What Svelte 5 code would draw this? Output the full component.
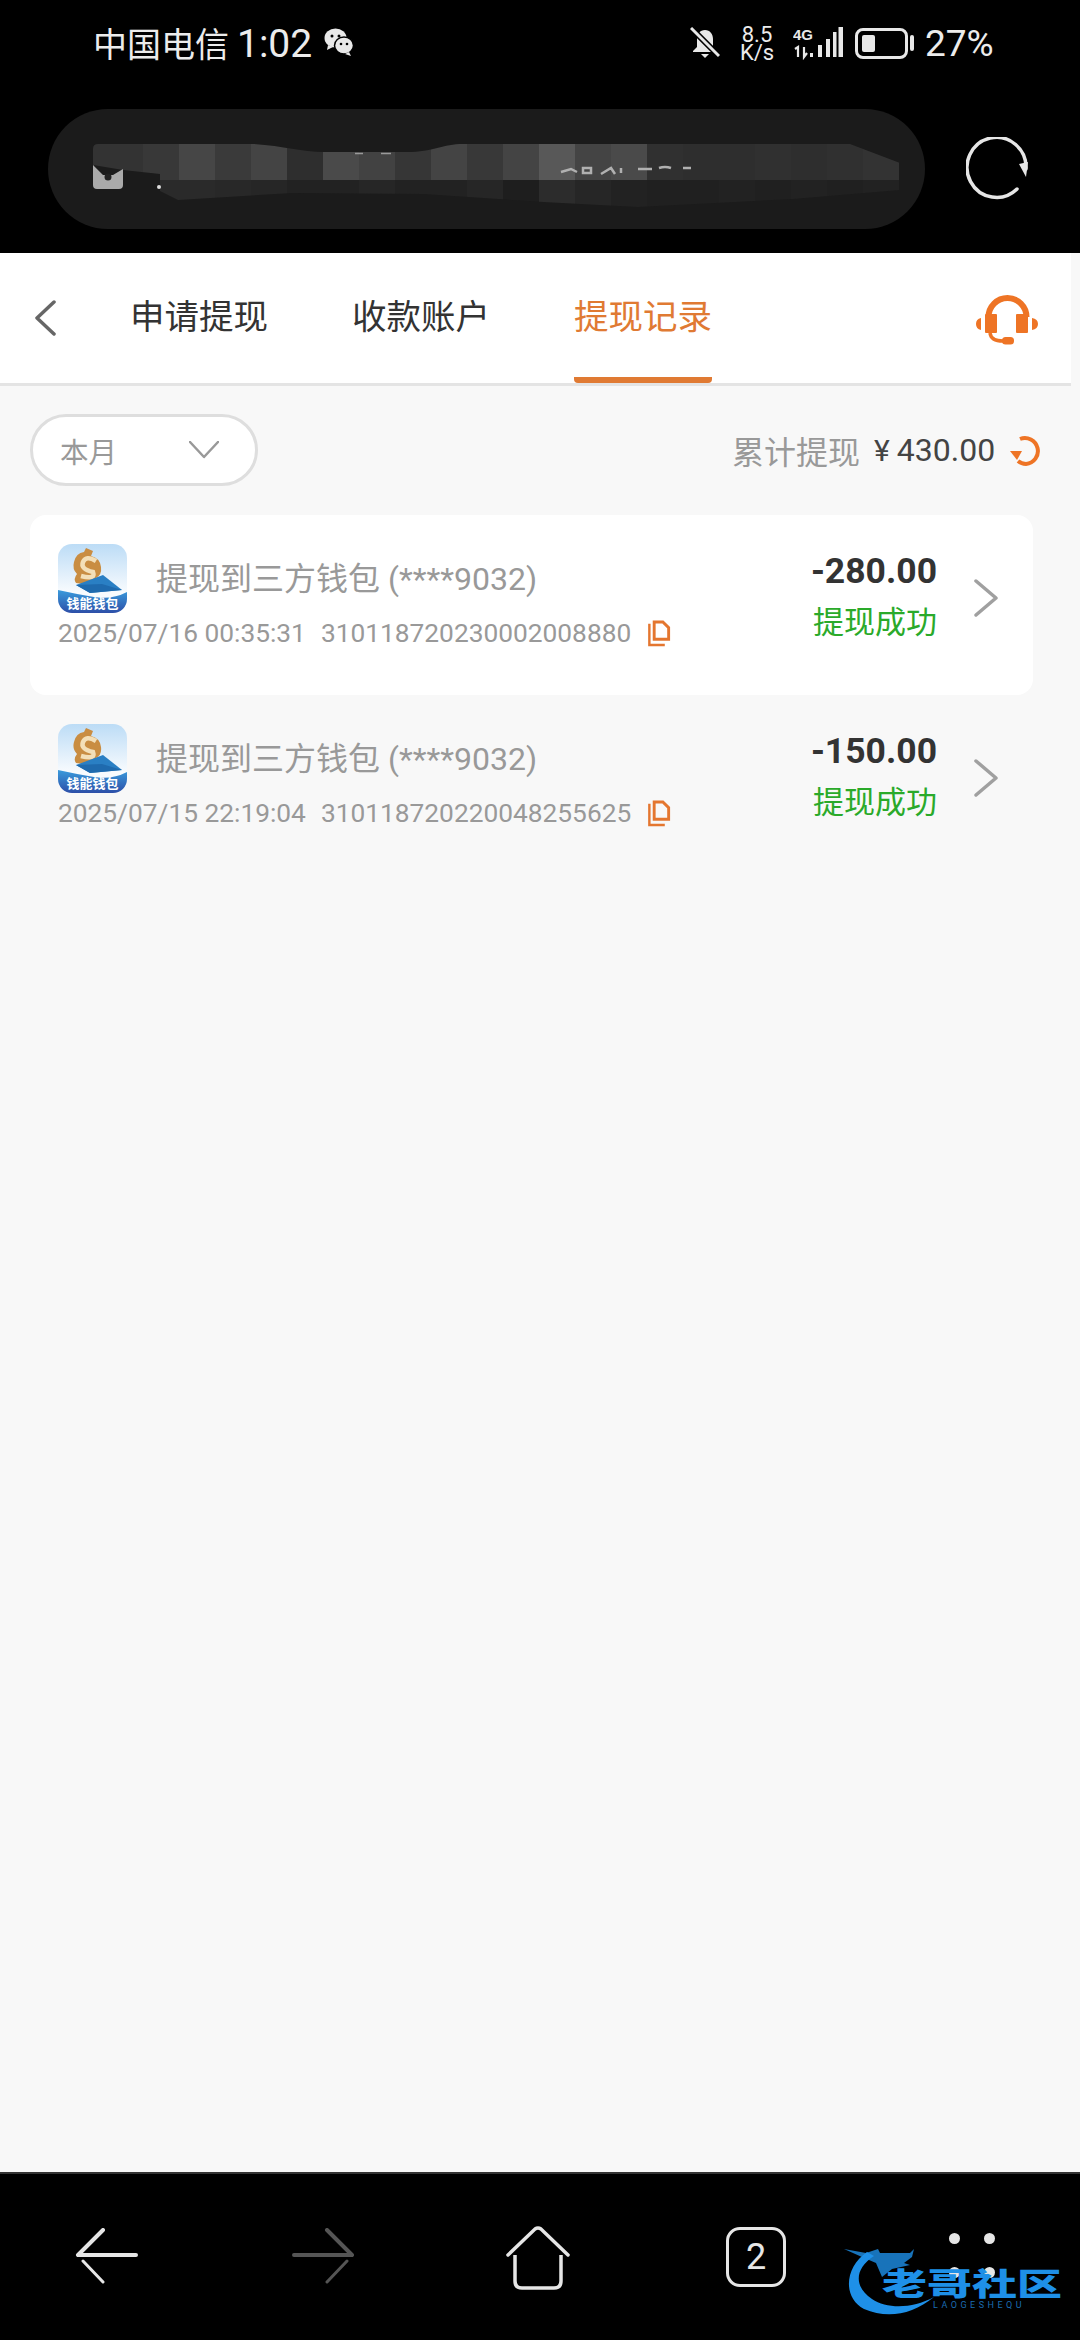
<script lang="ts">
	const mosaicTop = ['#333333','#333333','#383838','#464646','#3a3a3a','#444444','#2e2e2e','#4a4a4a','#424242','#363636','#444444','#383838','#444444','#585858','#444444','#4a4a4a','#303030','#2e2e2e','#2e2e2e','#303030','#2e2e2e','#303030','#333333'];
	const mosaicBottom = ['#2a2a2a','#2a2a2a','#2a2a2a','#2a2a2a','#282828','#262626','#222222','#222222','#262626','#222222','#222222','#262626','#1e1e1e','#2c2c2c','#262626','#222222','#202020','#202020','#222222','#202020','#222222','#202020','#222222'];

	const records = [
		{ time: '2025/07/16 00:35:31', no: '310118720230002008880', amount: '-280.00', card: true },
		{ time: '2025/07/15 22:19:04', no: '310118720220048255625', amount: '-150.00', card: false }
	];

	const tabs = ['申请提现', '收款账户', '提现记录'];
	let active = $state(2);
</script>

<div class="page">
	<header class="top">
		<div class="status">
			<div class="status-left">
				<span>中国电信</span>
				<span class="clock">1:02</span>
				<svg class="wechat" viewBox="0 0 30 28" width="30" height="28">
					<ellipse cx="11.500" cy="10" rx="11" ry="9.500" fill="#e8e8e8" />
					<path d="M4 17l-1 5 6-3z" fill="#e8e8e8" />
					<ellipse cx="20" cy="17.500" rx="9.500" ry="8.500" fill="#e8e8e8" stroke="#000" stroke-width="1.500" />
					<path d="M25 24l2 4-6-2z" fill="#e8e8e8" />
					<circle cx="8" cy="8" r="1.500" fill="#000" />
					<circle cx="15" cy="8" r="1.500" fill="#000" />
					<circle cx="17" cy="16" r="1.300" fill="#000" />
					<circle cx="23" cy="16" r="1.300" fill="#000" />
				</svg>
			</div>
			<div class="status-right">
				<svg class="bell" viewBox="0 0 30 32" width="30" height="32">
					<path d="M15 3c-5 0-8 4-8 9v8l-4 4v1h24v-1l-4-4v-8c0-5-3-9-8-9z" fill="#e8e8e8" />
					<path d="M11 27h8l-4 4z" fill="#e8e8e8" />
					<path d="M1 1l28 28" stroke="#000" stroke-width="6" />
					<path d="M1 1l28 28" stroke="#e8e8e8" stroke-width="3" />
				</svg>
				<div class="speed"><span>8.5</span><span>K/s</span></div>
				<svg class="signal" viewBox="0 0 50 34" width="50" height="34">
					<path d="M17 27h3v4h-3zM25 19h4v12h-4zM33 13h4v18h-4zM40 6h3.500v25H40zM45.500 1h4.500v30h-4.500z" fill="#e8e8e8" />
					<text x="0" y="14" class="net">4G</text>
					<path d="M2 23l3-2v10M11 21v10l3-4" fill="none" stroke="#e8e8e8" stroke-width="2.200" />
				</svg>
				<div class="battery"><i></i></div>
				<span class="nub"></span>
				<span class="pct">27%</span>
			</div>
		</div>

		<div class="urlbar">
			<div class="pill">
				<svg class="smudge" viewBox="0 0 810 70" width="810" height="70">
					<defs>
						<clipPath id="smudge-shape">
							<path d="M0 5Q0 0 5 0H160C190 2 210 8 230 8H314C340 8 350 0 370 0H757L807 19V46L700 55 545 63 450 58 330 50 200 49 85 56 67 47V30L30 26 0 21z" />
						</clipPath>
					</defs>
					<g clip-path="url(#smudge-shape)">
						{#each mosaicTop as c, i}
							<rect x={i * 36 - 22} y="0" width="36" height="36" fill={c} />
						{/each}
						{#each mosaicBottom as c, i}
							<rect x={i * 36 - 22} y="36" width="36" height="34" fill={c} />
						{/each}
					</g>
					<path d="M0 21L10 31H20L30 25V41Q30 45 26 45H4Q0 45 0 41z" fill="#aaa" />
					<circle cx="15" cy="33" r="3.500" fill="#222" />
					<circle cx="66" cy="43" r="2" fill="#ddd" />
					<path d="M262 9.500h8M288 9.500h10" stroke="#999" stroke-width="1.500" />
					<path d="M468 28l10-3 6 3M490 24h8v5h-8zM508 30l10-6 4 6M528 24v5M545 25h14M566 24q6-2 12 0M590 24h8" fill="none" stroke="#b0b0b0" stroke-width="2.500" />
				</svg>
			</div>
			<svg class="reload" viewBox="0 0 64 64" width="64" height="64">
				<path d="M51 52A29.500 30 0 1 1 60 32" fill="none" stroke="#e6e6e6" stroke-width="3.500" stroke-linecap="round" />
				<path d="M53 27l7 13 2-15z" fill="#e6e6e6" />
			</svg>
		</div>
	</header>

	<main class="content">
		<nav class="tabs">
			<button class="back" aria-label="返回">
				<svg viewBox="0 0 24 36" width="24" height="36">
					<path d="M21 2L4 18l17 16" fill="none" stroke="#666" stroke-width="3.500" stroke-linecap="round" stroke-linejoin="round" />
				</svg>
			</button>
			<div class="tab-list">
				{#each tabs as t, i}
					<button class="tab" class:active={active === i} onclick={() => (active = i)}>{t}</button>
				{/each}
			</div>
			<svg class="headset" viewBox="0 0 64 56" width="64" height="56">
				<path d="M13.500 26A19 19 0 0 1 51.500 26" fill="none" stroke="#ee7425" stroke-width="6" />
				<rect x="10" y="23" width="12" height="19" rx="1" fill="#ee7425" />
				<rect x="41" y="23" width="12" height="19" rx="1" fill="#ee7425" />
				<path d="M6 27Q1 28 1 33t5 6zM57 27q6 1 6 6t-6 6z" fill="#ee7425" />
				<path d="M15 42q1 8 13 8" fill="none" stroke="#ee7425" stroke-width="3.500" />
				<rect x="27" y="46" width="12" height="7.500" rx="3.500" fill="#ee7425" />
			</svg>
		</nav>

		<div class="filter-row">
			<button class="month">
				<span>本月</span>
				<svg viewBox="0 0 30 18" width="30" height="18">
					<path d="M1 1l14 15L29 1" fill="none" stroke="#999" stroke-width="2.500" stroke-linecap="round" stroke-linejoin="round" />
				</svg>
			</button>
			<div class="total">
				<span class="total-label">累计提现</span>
				<span class="total-value"><span class="yen">¥</span>430.00</span>
				<svg viewBox="0 0 32 32" width="32" height="32">
					<path d="M10 5A13 13 0 1 1 16 30 13 13 0 0 1 8 27" fill="none" stroke="#ee7425" stroke-width="4" />
					<path d="M0 17h12l-5 9z" fill="#ee7425" />
				</svg>
			</div>
		</div>

		<div class="list">
			{#each records as r}
				<div class="record" class:card={r.card}>
					<div class="record-main">
						<div class="record-head">
							<div class="logo">
								<svg viewBox="0 0 69 69" width="69" height="69">
									<defs>
										<linearGradient id="sky" x1="0" y1="0" x2="0" y2="1">
											<stop offset="0" stop-color="#bcdcf6" />
											<stop offset="0.7" stop-color="#f8fbfe" />
										</linearGradient>
										<linearGradient id="sea" x1="0" y1="0" x2="0" y2="1">
											<stop offset="0" stop-color="#3a9bdc" />
											<stop offset="1" stop-color="#2d4fa8" />
										</linearGradient>
									</defs>
									<rect width="69" height="69" rx="14" fill="url(#sky)" />
									<path d="M0 46q18 4 36 7t33-5v7a14 14 0 0 1-14 14H14A14 14 0 0 1 0 55z" fill="url(#sea)" />
									<path d="M28 4l7 3-2 5q9 2 10 11 1 8-5 11l-6 7-14-2q-3-4 1-9-5-5-3-12 2-9 10-10z" fill="#c98d42" />
									<path d="M38 17Q28 11 25 18T35 28Q38 36 23 32" fill="none" stroke="#f3dfb8" stroke-width="4.500" />
									<path d="M18 41L45 31 64 46 32 49z" fill="#2a7fc4" />
									<path d="M18 41l26-1 20 6-32 3z" fill="#1f6aae" />
								</svg>
								<span class="logo-name">钱能钱包</span>
							</div>
							<span class="title">提现到三方钱包 (****9032)</span>
						</div>
						<div class="record-meta">
							<span class="time">{r.time}</span>
							<span class="no">{r.no}</span>
							<svg viewBox="0 0 24 28" width="24" height="27">
								<path d="M2 4v22h16" fill="none" stroke="#e4762f" stroke-width="2.500" />
								<path d="M7 2v18h15V8l-6-6z" fill="none" stroke="#e4762f" stroke-width="3" />
							</svg>
						</div>
					</div>
					<div class="record-side">
						<span class="amount">{r.amount}</span>
						<span class="state">提现成功</span>
					</div>
					<svg class="arrow" viewBox="0 0 24 38" width="24" height="38">
						<path d="M2 2l20 17L2 36" fill="none" stroke="#a0a0a0" stroke-width="3.500" stroke-linecap="round" stroke-linejoin="round" />
					</svg>
				</div>
			{/each}
		</div>
	</main>

	<footer class="bottom">
		<svg viewBox="0 0 64 56" width="64" height="56">
			<path d="M29 2L4 27h58" fill="none" stroke="#e6e6e6" stroke-width="4" stroke-linecap="round" stroke-linejoin="round" />
			<path d="M9 33l20 21" fill="none" stroke="#e6e6e6" stroke-width="3" stroke-linecap="round" />
		</svg>
		<svg class="forward" viewBox="0 0 64 56" width="64" height="56">
			<path d="M35 2L60 27H2" fill="none" stroke="#555" stroke-width="4" stroke-linecap="round" stroke-linejoin="round" />
			<path d="M55 33L35 54" fill="none" stroke="#555" stroke-width="3" stroke-linecap="round" />
		</svg>
		<svg class="home" viewBox="0 0 66 64" width="66" height="64">
			<path d="M3 29L30 3q3-2 6 0l27 26" fill="none" stroke="#e6e6e6" stroke-width="3.500" stroke-linecap="round" />
			<path d="M10 29v26q0 7 7 7h32q7 0 7-7V29" fill="none" stroke="#e6e6e6" stroke-width="3.500" />
		</svg>
		<div class="tab-count">2</div>
		<div class="dots">
			<i></i><i></i><i></i><i></i>
		</div>
		<div class="watermark">
			<svg viewBox="0 0 100 72" width="100" height="72">
				<path d="M25 5C3 20 0 50 22 62 45 72 70 68 92 50 70 62 45 62 30 52 12 40 12 22 32 9z" fill="#1e90e8" />
				<path d="M2 2L24 6 36 2 38 6 68 6 72 2 70 10 62 16 68 18 50 22 40 30 34 16 20 10z" fill="#1e90e8" opacity="0.8" />
			</svg>
			<span class="mark-cn">老哥社区</span>
			<span class="mark-en">LAOGESHEQU</span>
		</div>
	</footer>
</div>

<style>
	:global(body) {
		margin: 0;
		background: #000;
	}

	.page {
		width: 1080px;
		height: 2340px;
		display: flex;
		flex-direction: column;
		font-family: Roboto, 'Noto Sans CJK SC', sans-serif;
		overflow: hidden;
	}

	button {
		border: none;
		background: none;
		padding: 0;
		font: inherit;
	}

	.top {
		height: 253px;
		background: #000;
		flex: none;
	}

	.status {
		height: 109px;
		display: flex;
		justify-content: space-between;
		padding: 26px 87px 0 93px;
		box-sizing: border-box;
		color: #ececec;
	}

	.status-left {
		display: flex;
		align-items: baseline;
		gap: 8px;
		font-size: 34px;
		line-height: 36px;
		height: 36px;
	}

	.clock {
		font-size: 39px;
	}

	.wechat {
		align-self: flex-start;
		margin: 2px 0 0 4px;
	}

	.status-right {
		display: flex;
		align-items: flex-start;
		height: 36px;
	}

	.bell {
		margin-top: 1px;
	}

	.speed {
		display: flex;
		flex-direction: column;
		margin-left: 19px;
		font-size: 22px;
		line-height: 18px;
		width: 36px;
		text-align: center;
	}

	.signal {
		margin: 0 0 0 18px;
	}

	.net {
		font-size: 15px;
		font-weight: 700;
		fill: #e8e8e8;
		font-family: 'Liberation Sans Narrow', 'Liberation Sans', sans-serif;
	}

	.battery {
		width: 53px;
		height: 31px;
		margin: 2px 0 0 12px;
		border: 3px solid #e8e8e8;
		border-radius: 8px;
		box-sizing: border-box;
		padding: 4px;
	}

	.battery i {
		display: block;
		width: 13px;
		height: 100%;
		background: #e8e8e8;
		border-radius: 2px;
	}

	.nub {
		width: 4px;
		height: 16px;
		margin: 9px 0 0 2px;
		background: #e8e8e8;
		border-radius: 2px;
	}

	.pct {
		margin-left: 11px;
		font-size: 37px;
		line-height: 36px;
		width: 68px;
		white-space: nowrap;
	}

	.urlbar {
		display: flex;
		align-items: center;
		padding-left: 48px;
		gap: 41px;
	}

	.pill {
		width: 877px;
		height: 120px;
		background: #1b1b1b;
		border-radius: 60px;
		display: flex;
		align-items: flex-start;
		padding: 35px 0 0 45px;
		box-sizing: border-box;
	}

	.content {
		flex: 1;
		background: #f8f8f8;
		display: flex;
		flex-direction: column;
	}

	.tabs {
		width: 1071px;
		height: 133px;
		flex: none;
		box-sizing: border-box;
		background: #fff;
		border-bottom: 3px solid #e4e4e4;
		display: flex;
		align-items: flex-start;
	}

	.back {
		margin: 47px 0 0 33px;
		height: 36px;
		display: flex;
	}

	.tab-list {
		display: flex;
		gap: 84px;
		margin-left: 73px;
	}

	.tab {
		height: 130px;
		box-sizing: border-box;
		display: flex;
		align-items: flex-start;
		font-size: 34.500px;
		line-height: 40px;
		padding-top: 44px;
		color: #333;
		border-bottom: 6px solid transparent;
		cursor: pointer;
	}

	.tab.active {
		color: #e07a33;
		border-bottom-color: #e07a33;
		border-radius: 4px;
	}

	.headset {
		margin: 38px 32px 0 auto;
	}

	.filter-row {
		display: flex;
		justify-content: space-between;
		align-items: center;
		padding: 28px 38px 0 30px;
		height: 72px;
	}

	.month {
		width: 228px;
		height: 72px;
		box-sizing: border-box;
		background: #fff;
		border: 3px solid #dedede;
		border-radius: 36px;
		display: flex;
		align-items: center;
		justify-content: space-between;
		padding: 0 36px 0 27px;
		font-size: 28.500px;
		color: #999;
	}

	.total {
		display: flex;
		align-items: center;
		font-size: 32px;
	}

	.total-label {
		color: #999;
		width: 142px;
	}

	.total-value {
		color: #444;
		width: 136px;
		white-space: nowrap;
	}

	.yen {
		font-size: 30px;
		margin-right: 7px;
	}

	.list {
		margin-top: 29px;
		width: 1003px;
		margin-left: 30px;
	}

	.record {
		height: 180px;
		display: flex;
		align-items: flex-start;
		border-radius: 16px;
		padding: 0 35px 0 28px;
		box-sizing: border-box;
	}

	.record.card {
		background: #fff;
	}

	.record-main {
		flex: 1;
		padding-top: 29px;
	}

	.record-head {
		display: flex;
		height: 69px;
	}

	.logo {
		width: 69px;
		height: 69px;
		position: relative;
		flex: none;
	}

	.logo-name {
		position: absolute;
		left: 0;
		bottom: 2px;
		width: 69px;
		font-size: 13px;
		line-height: 14px;
		font-weight: 700;
		color: #fff;
		text-align: center;
		white-space: nowrap;
	}

	.title {
		margin: 15px 0 0 29px;
		font-size: 32px;
		line-height: 40px;
		color: #999;
		white-space: nowrap;
	}

	.record-meta {
		display: flex;
		align-items: center;
		margin-top: 2px;
		height: 36px;
		font-size: 26.300px;
		color: #999;
		white-space: nowrap;
	}

	.no {
		margin-left: 15px;
		margin-right: 16px;
	}

	.record-side {
		display: flex;
		flex-direction: column;
		align-items: flex-end;
		padding-top: 32px;
	}

	.amount {
		font-size: 35.500px;
		line-height: 48px;
		font-weight: 700;
		color: #333;
	}

	.state {
		font-size: 31px;
		line-height: 40px;
		margin-top: 8px;
		color: #2aaa2a;
	}

	.arrow {
		margin: 64px 0 0 37px;
		flex: none;
	}

	.bottom {
		height: 168px;
		flex: none;
		background: #000;
		border-top: 2px solid #333;
		box-sizing: border-box;
		display: flex;
		align-items: flex-start;
		padding: 54px 0 0 74px;
		position: relative;
	}

	.forward {
		margin-left: 154px;
	}

	.home {
		margin: -2px 0 0 149px;
	}

	.tab-count {
		width: 60px;
		height: 60px;
		margin: -1px 0 0 155px;
		box-sizing: border-box;
		border: 3px solid #e6e6e6;
		border-radius: 14px;
		color: #e6e6e6;
		font-size: 36px;
		line-height: 54px;
		text-align: center;
	}

	.dots {
		display: grid;
		grid-template-columns: 11px 11px;
		column-gap: 24px;
		row-gap: 23px;
		margin: 5px 0 0 163px;
	}

	.dots i {
		width: 11px;
		height: 11px;
		background: #e6e6e6;
		border-radius: 50%;
	}

	.watermark {
		position: absolute;
		left: 842px;
		top: 73px;
		width: 230px;
		height: 72px;
	}

	.mark-cn {
		position: absolute;
		left: 40px;
		top: 0;
		width: 180px;
		font-size: 45px;
		line-height: 46px;
		font-weight: 900;
		color: #1e90e8;
		white-space: nowrap;
		transform: scaleY(0.68);
		margin-top: 15px;
	}

	.mark-en {
		position: absolute;
		left: 91px;
		top: 53px;
		font-size: 9px;
		line-height: 10px;
		letter-spacing: 3.500px;
		color: #1a6bb0;
		white-space: nowrap;
	}
</style>
